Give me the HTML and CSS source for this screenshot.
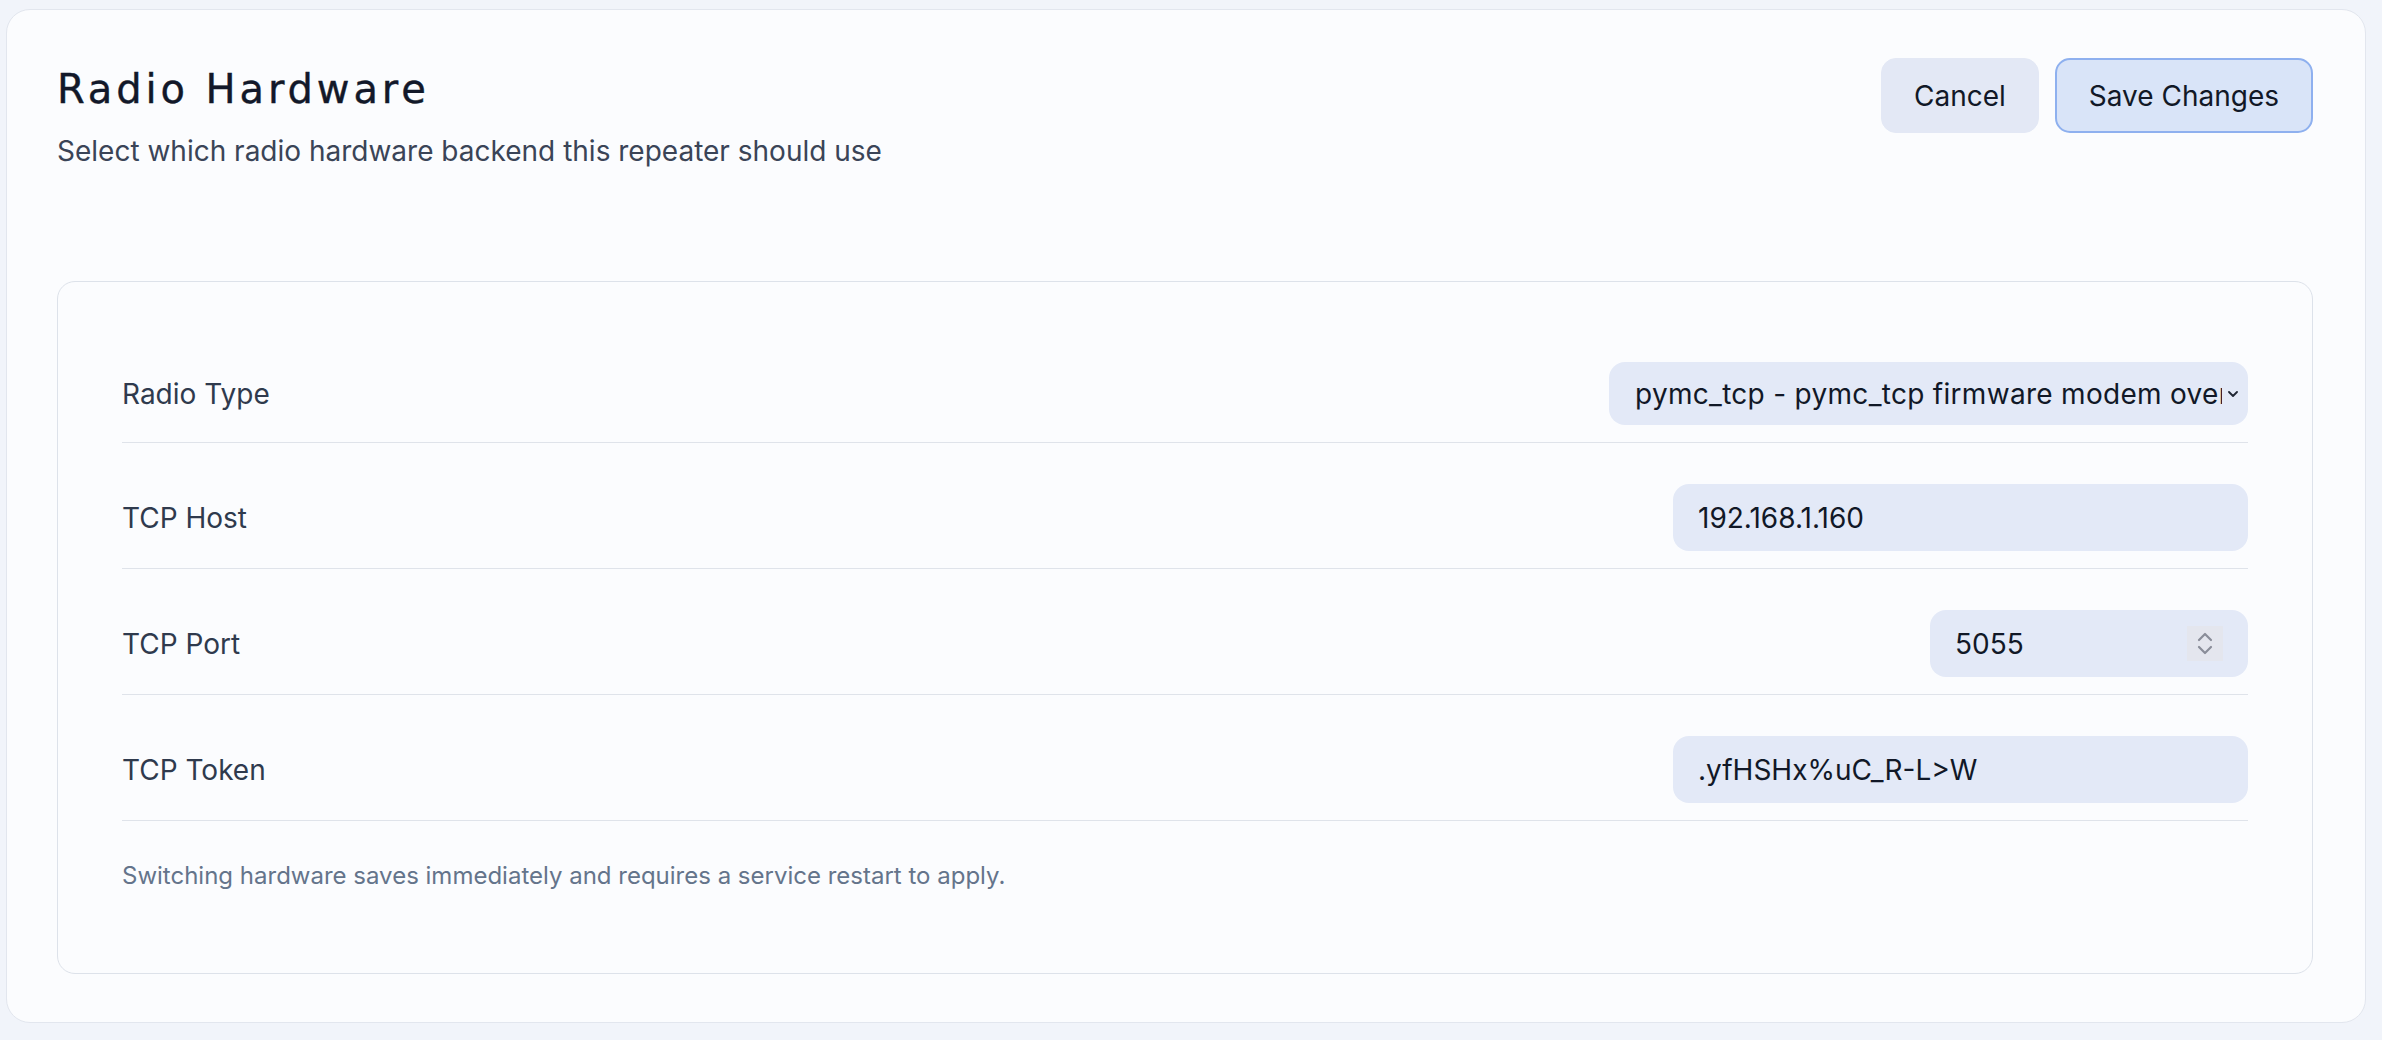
FILE: index.html
```html
<!DOCTYPE html>
<html lang="en">
<head>
<meta charset="utf-8">
<title>Radio Hardware</title>
<link rel="stylesheet" href="styles.css">
</head>
<body>
<div class="page">
  <section class="card">
    <header class="card-head">
      <div class="titles">
        <h1 class="title">Radio Hardware</h1>
        <p class="subtitle">Select which radio hardware backend this repeater should use</p>
      </div>
      <div class="actions">
        <button class="btn btn-cancel" type="button">Cancel</button>
        <button class="btn btn-save" type="button">Save Changes</button>
      </div>
    </header>

    <div class="panel">
      <div class="row">
        <label class="row-label">Radio Type</label>
        <div class="field field-select">
          <select class="control control-select">
            <option>pymc_tcp - pymc_tcp firmware modem over TCP</option>
          </select>
          <svg class="chevron" viewBox="0 0 10 6" aria-hidden="true"><path d="M1 1l4 4 4-4"/></svg>
        </div>
      </div>
      <div class="row">
        <label class="row-label">TCP Host</label>
        <div class="field field-wide">
          <input class="control" type="text" value="192.168.1.160">
        </div>
      </div>
      <div class="row">
        <label class="row-label">TCP Port</label>
        <div class="field field-port">
          <input class="control" type="text" value="5055">
          <span class="spinner" aria-hidden="true">
            <svg viewBox="0 0 36 35"><path d="M12 14l6-6 6 6M12 21l6 6 6-6"/></svg>
          </span>
        </div>
      </div>
      <div class="row">
        <label class="row-label">TCP Token</label>
        <div class="field field-wide">
          <input class="control" type="text" value=".yfHSHx%uC_R-L&gt;W">
        </div>
      </div>
      <p class="note">Switching hardware saves immediately and requires a service restart to apply.</p>
    </div>
  </section>
</div>
</body>
</html>
```

FILE: styles.css
```css
* { box-sizing: border-box; }

html, body {
  margin: 0;
  padding: 0;
  background: #f1f4fa;
  font-family: Inter, "Noto Sans", "Liberation Sans", sans-serif;
  color: #111827;
}

.page {
  padding: 9px 16px 15px 6px;
}

.card {
  background: #fbfcfe;
  border: 1px solid #e2e6ee;
  border-radius: 24px;
  padding: 48px 52px 48px 50px;
}

.card-head {
  display: flex;
  justify-content: space-between;
  align-items: flex-start;
}

.title {
  margin: 7px 0 0 0;
  font-family: "DejaVu Sans", Verdana, sans-serif;
  font-weight: 400;
  font-size: 40px;
  line-height: 48px;
  letter-spacing: 3.9px;
  -webkit-text-stroke: 0.4px #121829;
  color: #121829;
}

.subtitle {
  margin: 17px 0 0 0;
  font-size: 28px;
  line-height: 42px;
  color: #3a4457;
}

.actions {
  display: flex;
  gap: 16px;
}

.btn {
  font-family: inherit;
  font-size: 28px;
  height: 75px;
  padding: 0 32px;
  border-radius: 15px;
  color: #111827;
  cursor: pointer;
}

.btn-cancel {
  background: #e3e8f5;
  border: 1.5px solid #e3e8f5;
}

.btn-save {
  background: #d9e4f8;
  border: 2px solid #8eb0ef;
}

.panel {
  margin-top: 109px;
  background: #fbfcfe;
  border: 1px solid #dde2ea;
  border-radius: 18px;
  padding: 63px 64px 80px 64px;
}

.row {
  display: flex;
  align-items: center;
  justify-content: space-between;
  padding: 17px 0;
  border-bottom: 1px solid #dfe3ea;
}

.row + .row {
  margin-top: 24px;
}

.row-label {
  font-size: 28px;
  color: #2f3a4d;
}

.field {
  display: flex;
  align-items: center;
  height: 67px;
  background: #e3e9f7;
  border-radius: 16px;
}

.field-select {
  width: 639px;
  height: 63px;
  padding-right: 10px;
  overflow: hidden;
}

.field-wide {
  width: 575px;
}

.field-port {
  width: 318px;
  padding-right: 25px;
}

.control {
  flex: 1;
  min-width: 0;
  height: 100%;
  border: 0;
  outline: 0;
  background: transparent;
  font-family: inherit;
  font-size: 28px;
  color: #111827;
  padding: 0 0 0 25px;
  margin: 0;
}

.control-select {
  appearance: none;
  -webkit-appearance: none;
  border-radius: 16px 0 0 16px;
  padding-left: 26px;
  letter-spacing: 0.3px;
  overflow: hidden;
  cursor: pointer;
}

.chevron {
  width: 10px;
  height: 6px;
  margin-left: 6px;
  fill: none;
  stroke: #1f2633;
  stroke-width: 1.8;
  stroke-linecap: round;
  stroke-linejoin: round;
  flex: none;
}

.spinner {
  display: block;
  flex: none;
  width: 36px;
  height: 35px;
  background: #e4e6ee;
}

.spinner svg {
  display: block;
  width: 36px;
  height: 35px;
  fill: none;
  stroke: #8a8d99;
  stroke-width: 2.2;
  stroke-linecap: round;
  stroke-linejoin: round;
}

.note {
  margin: 38px 0 0 0;
  font-size: 24px;
  line-height: 34px;
  color: #64748b;
}
```
